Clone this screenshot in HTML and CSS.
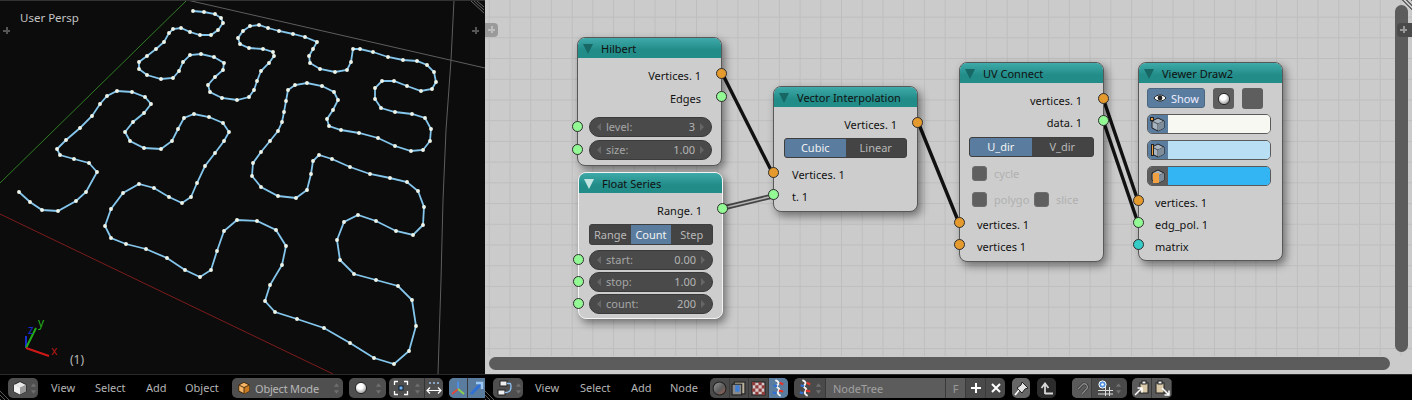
FILE: index.html
```html
<!DOCTYPE html>
<html lang="en">
<head>
<meta charset="utf-8">
<title>Node editor</title>
<link rel="stylesheet" href="styles.css">
</head>
<body>
<svg class="defs" width="0" height="0" aria-hidden="true">
  <defs>
    <symbol id="cube" viewBox="0 0 16 16">
      <path d="M8 1.500 14 4.500V11.500L8 14.500 2 11.500V4.500Z" fill="#e8e8e8" stroke="#222" stroke-width="1"/>
      <path d="M2 4.500 8 7.500 14 4.500V11.500L8 14.500Z" fill="#9a9a9a"/>
      <path d="M8 7.500V14.500L2 11.500V4.500Z" fill="#f2f2f2"/>
    </symbol>
    <symbol id="ocube" viewBox="0 0 16 16">
      <path d="M8 1.500 14 4.500V11.500L8 14.500 2 11.500V4.500Z" fill="#f4b566" stroke="#3a2408"/>
      <path d="M8 7.500V14.500L14 11.500V4.500Z" fill="#c77a22"/>
      <path d="M2 4.500 8 7.500 14 4.500" fill="none" stroke="#3a2408"/>
      <path d="M8 7.500V14.500" stroke="#3a2408"/>
    </symbol>
    <radialGradient id="ballg" cx=".42" cy=".35" r=".7">
      <stop offset=".35" stop-color="#fff"/><stop offset="1" stop-color="#8a8a8a"/>
    </radialGradient>
    <linearGradient id="matg" x1="0" y1="0" x2="1" y2="1">
      <stop offset="0" stop-color="#9a9a9a"/><stop offset=".55" stop-color="#5c5c5c"/><stop offset="1" stop-color="#a5604e"/>
    </linearGradient>
    <symbol id="ball" viewBox="0 0 16 16">
      <circle cx="8" cy="8" r="6.400" fill="url(#ballg)" stroke="#1c1c1c"/>
    </symbol>
    <symbol id="dna" viewBox="0 0 16 20">
      <path d="M5 1C14 5 3 7 8 10 13 12 3 15 11 19" fill="none" stroke="#f2f2f2" stroke-width="2.200"/>
      <path d="M10 4 14 6M9 13 14 14" stroke="#e3342b" stroke-width="2.600"/>
      <path d="M3 7 7 8M2 15 6 16" stroke="#2f6fd6" stroke-width="2.600"/>
    </symbol>
    <symbol id="spin" viewBox="0 0 8 14">
      <path d="M4 1 7 5H1ZM4 13 1 9H7Z" fill="#6f6f6f"/>
    </symbol>
    <symbol id="vcube" viewBox="0 0 16 16">
      <path d="M8 2 14 5V12L8 15 2 12V5Z" fill="#a8b4c0" stroke="#1d1d1d"/>
      <path d="M2 5 8 8 14 5M8 8V15" fill="none" stroke="#1d1d1d" stroke-width=".7"/>
      <path d="M8 8V15L14 12V5Z" fill="#7f8c99"/>
    </symbol>
  </defs>
</svg>

<main class="areas">
  <section class="view3d">
    <svg class="curve" width="485" height="374" viewBox="0 0 485 374" aria-hidden="true">
      <defs>
        <marker id="vert" markerUnits="userSpaceOnUse" markerWidth="5" markerHeight="5" refX="2.500" refY="2.500">
          <circle class="vert" cx="2.500" cy="2.500" r="1.950"/>
        </marker>
      </defs>
      <g class="axis-lines">
        <line class="l-green" x1="0" y1="183" x2="187" y2="0"/>
        <line class="l-grey" x1="187" y1="0" x2="485" y2="68"/>
        <line class="l-red" x1="0" y1="214" x2="333" y2="374"/>
        <polyline class="l-grey" points="454,0 451,60 446,130 443,200 441,280 438,374"/>
        <line class="l-widget" x1="471" y1="1" x2="484" y2="13"/>
        <line class="l-widget" x1="474" y1="1" x2="484" y2="10"/>
        <line class="l-widget" x1="477" y1="1" x2="484" y2="7"/>
      </g>
      <polyline class="spline" points="19,192 30,202 42,210 58,211 76,201 86,192 97,172 89,163 74,159 60,155 57,149 66,140 80,128 92,116 100,104 107,96 117,91 132,92 145,97 151,104 144,113 133,122 125,132 130,141 144,148 161,149 172,141 178,129 184,118 194,114 209,117 223,123 229,132 224,141 215,153 205,166 197,183 191,197 182,203 169,197 154,188 139,184 123,193 111,209 105,226 111,238 126,244 146,249 167,258 185,270 200,277 211,270 217,251 224,231 237,220 257,221 276,230 286,246 282,265 270,285 265,301 275,312 297,319 324,328 350,343 374,358 394,364 409,351 416,326 412,300 398,286 376,280 354,274 340,260 337,240 344,222 358,215 376,221 396,231 413,235 423,225 424,207 418,191 407,182 390,178 370,174 350,167 332,159 319,155 313,161 311,174 307,190 296,198 278,196 261,187 252,176 253,163 261,152 270,141 278,131 282,122 284,112 286,101 288,90 295,85 307,83 322,86 334,92 338,100 333,110 327,119 329,126 341,130 359,133 378,138 395,146 411,151 423,150 430,141 431,129 425,118 412,114 395,112 381,108 375,99 375,88 382,81 394,81 407,86 421,91 432,89 436,82 434,72 427,65 417,61 403,60 388,57 373,52 360,49 353,49 351,62 347,70 335,72 320,69 310,63 309,56 313,49 317,42 305,37 293,34 279,31 268,28 259,25 250,26 243,31 238,38 240,44 249,48 263,49 273,52 274,56 269,63 261,71 257,81 254,90 249,97 237,100 222,98 210,92 208,85 215,77 223,70 224,63 214,57 201,54 190,55 183,62 179,71 173,78 161,79 147,75 139,69 139,62 147,56 156,49 164,42 169,33 173,29 181,28 190,32 200,35 211,35 218,30 223,23 221,18 215,14 204,12 193,11"/>
      <g class="gizmo">
        <line class="g-z" x1="26" y1="348" x2="26" y2="336"/>
        <line class="g-y" x1="26" y1="348" x2="36" y2="328"/>
        <line class="g-x" x1="26" y1="348" x2="49" y2="356"/>
      </g>
    </svg>
    <span class="view-name">User Persp</span>
    <i class="plus plus-l"></i>
    <i class="plus plus-r"></i>
    <span class="glabel gl-z">z</span>
    <span class="glabel gl-y">y</span>
    <span class="glabel gl-x">x</span>
    <span class="frame-no">(1)</span>
  </section>

  <section class="nodeview">
    <svg class="wires" width="927" height="374" viewBox="485 0 927 374" aria-hidden="true">
      <line class="wire" x1="722" y1="73" x2="773" y2="174"/>
      <line class="wire" x1="918" y1="122" x2="959" y2="223"/>
      <line class="wire" x1="1103" y1="98" x2="1138" y2="201"/>
      <line class="wire" x1="1103" y1="120" x2="1138" y2="223"/>
      <line class="wire-sel-o" x1="723" y1="208" x2="773" y2="196"/>
      <line class="wire-sel-i" x1="723" y1="208" x2="773" y2="196"/>
    </svg>

    <article class="node n-hilbert">
      <header class="node-head"><i class="tri"></i>Hilbert</header>
      <div class="nrow out h23 t4"><span>Vertices. 1</span><b class="sock orange"></b></div>
      <div class="nrow out h23"><span>Edges</span><b class="sock green"></b></div>
      <div class="nrow inp h22 t8"><b class="sock green"></b><div class="num"><span>level:</span><span>3</span></div></div>
      <div class="nrow inp h23"><b class="sock green"></b><div class="num"><span>size:</span><span>1.00</span></div></div>
    </article>

    <article class="node n-vector">
      <header class="node-head"><i class="tri"></i>Vector Interpolation</header>
      <div class="nrow out h23 t4"><span>Vertices. 1</span><b class="sock orange"></b></div>
      <div class="seg"><span class="on">Cubic</span><span>Linear</span></div>
      <div class="nrow plain h22 t4"><b class="sock orange"></b><span>Vertices. 1</span></div>
      <div class="nrow plain h22"><b class="sock green"></b><span>t. 1</span></div>
    </article>

    <article class="node n-float selected">
      <header class="node-head"><i class="tri white"></i>Float Series</header>
      <div class="nrow out h23 t4"><span>Range. 1</span><b class="sock green"></b></div>
      <div class="seg seg3"><span>Range</span><span class="on">Count</span><span>Step</span></div>
      <div class="nrow inp h22 t4"><b class="sock green"></b><div class="num"><span>start:</span><span>0.00</span></div></div>
      <div class="nrow inp h22"><b class="sock green"></b><div class="num"><span>stop:</span><span>1.00</span></div></div>
      <div class="nrow inp h22"><b class="sock green"></b><div class="num"><span>count:</span><span>200</span></div></div>
    </article>

    <article class="node n-uv">
      <header class="node-head"><i class="tri"></i>UV Connect</header>
      <div class="nrow out h23 t4"><span>vertices. 1</span><b class="sock orange"></b></div>
      <div class="nrow out h22"><span>data. 1</span><b class="sock green"></b></div>
      <div class="seg seg-uv"><span class="on">U_dir</span><span>V_dir</span></div>
      <div class="checks t3"><i class="chk"></i><span>cycle</span></div>
      <div class="checks"><i class="chk"></i><span class="w-poly">polygo</span><i class="chk"></i><span>slice</span></div>
      <div class="nrow plain h22"><b class="sock orange"></b><span>vertices. 1</span></div>
      <div class="nrow plain h22"><b class="sock orange"></b><span>vertices 1</span></div>
    </article>

    <article class="node n-viewer">
      <header class="node-head"><i class="tri"></i>Viewer Draw2</header>
      <div class="show-row">
        <span class="show"><svg width="14" height="10" viewBox="0 0 14 10" aria-hidden="true"><path d="M1 5C4 1 10 1 13 5 10 9 4 9 1 5Z" fill="#fff" stroke="#222"/><circle cx="7" cy="5" r="2.400" fill="#222"/></svg>Show</span>
        <span class="tog"><svg width="14" height="14" aria-hidden="true"><use href="#ball"/></svg></span>
        <span class="tog"></span>
      </div>
      <div class="swatch"><span class="sw-ico on"><svg width="16" height="16" aria-hidden="true"><use href="#vcube"/></svg><i class="dot"></i></span><span class="sw-col c1"></span></div>
      <div class="swatch"><span class="sw-ico on"><svg width="16" height="16" aria-hidden="true"><use href="#vcube"/></svg><i class="bar"></i></span><span class="sw-col c2"></span></div>
      <div class="swatch sw-last"><span class="sw-ico"><svg width="16" height="16" aria-hidden="true"><use href="#vcube"/></svg><i class="face"></i></span><span class="sw-col c3"></span></div>
      <div class="nrow plain h22 t4"><b class="sock orange"></b><span>vertices. 1</span></div>
      <div class="nrow plain h22"><b class="sock green"></b><span>edg_pol. 1</span></div>
      <div class="nrow plain h22"><b class="sock cyan"></b><span>matrix</span></div>
    </article>

    <span class="tab tab-l"><i class="plus plus-t"></i></span>
    <i class="strip"></i>
    <i class="sb-h"></i>
    <i class="sb-v"></i>
    <span class="tab tab-r"><i class="plus plus-u"></i></span>
    <i class="corner"></i>
  </section>
</main>

<footer class="headers">
  <nav class="hdr hdr-l">
    <span class="w w-type"><svg width="16" height="16" aria-hidden="true"><use href="#cube"/></svg><svg width="7" height="13" aria-hidden="true"><use href="#spin"/></svg></span>
    <span class="menu m1">View</span><span class="menu m2">Select</span><span class="menu m3">Add</span><span class="menu m4">Object</span>
    <span class="w w-mode"><svg width="14" height="14" aria-hidden="true"><use href="#ocube"/></svg><span class="grow">Object Mode</span><svg width="7" height="13" aria-hidden="true"><use href="#spin"/></svg></span>
    <span class="w w-shade"><svg width="14" height="14" aria-hidden="true"><use href="#ball"/></svg><svg width="7" height="13" aria-hidden="true"><use href="#spin"/></svg></span>
    <span class="w w-pivot">
      <svg width="16" height="16" viewBox="0 0 16 16" aria-hidden="true"><path d="M1.500 5V1.500H5M11 1.500H14.500V5M14.500 11V14.500H11M5 14.500H1.500V11" fill="none" stroke="#fff" stroke-width="1.300"/><rect x="6" y="6" width="4" height="4" fill="#6fb1ee" stroke="#123"/></svg>
      <svg class="sp-p" width="7" height="13" aria-hidden="true"><use href="#spin"/></svg>
      <span class="sep"></span>
      <svg width="16" height="16" viewBox="0 0 16 16" aria-hidden="true"><path d="M3 3h2M7 3h2M11 3h2" stroke="#9cc4ea" stroke-width="1.600"/><path d="M1 10.500H15M4 7.500 1 10.500 4 13.500M12 7.500 15 10.500 12 13.500" fill="none" stroke="#fff" stroke-width="1.200"/></svg>
    </span>
    <span class="w w-manip">
      <span class="cell on"><svg width="16" height="16" viewBox="0 0 16 16" aria-hidden="true"><path d="M8 9V1.500" stroke="#4f8fe8" stroke-width="1.800"/><path d="M8 9 2 14" stroke="#e2483a" stroke-width="1.800"/><path d="M8 9 14 14" stroke="#8ad14c" stroke-width="1.800"/></svg></span>
      <span class="cell on"><svg width="16" height="16" viewBox="0 0 16 16" aria-hidden="true"><path d="M2 14 12 4" stroke="#2f6fd6" stroke-width="3"/><path d="M7 3H13V9" fill="none" stroke="#9cc8f5" stroke-width="2.400"/></svg></span>
    </span>
  </nav>
  <nav class="hdr hdr-r">
    <span class="w w-type"><svg width="16" height="16" viewBox="0 0 16 16" aria-hidden="true"><rect x="3" y="1" width="7" height="5" fill="#eee" stroke="#222"/><rect x="1" y="10" width="7" height="5" fill="#eee" stroke="#222"/><path d="M10 3.500H13Q14 3.500 14 7 14 12.500 8 12.500" fill="none" stroke="#8cc0f0" stroke-width="1.300"/></svg><svg width="7" height="13" aria-hidden="true"><use href="#spin"/></svg></span>
    <span class="menu m1">View</span><span class="menu m2">Select</span><span class="menu m3">Add</span><span class="menu m5">Node</span>
    <span class="w w-tree">
      <span class="cell"><svg width="15" height="15" viewBox="0 0 14 14" aria-hidden="true"><circle cx="7" cy="7" r="6" fill="url(#matg)" stroke="#222"/></svg></span>
      <span class="cell"><svg width="15" height="15" viewBox="0 0 14 14" aria-hidden="true"><rect x="3" y="1" width="10" height="11" fill="#b8b09a" stroke="#222"/><rect x="1" y="3" width="9" height="10" fill="#8a8a8a" stroke="#222"/><rect x="4" y="4" width="4" height="6" fill="#3f7fd6"/></svg></span>
      <span class="cell"><svg width="15" height="15" viewBox="0 0 14 14" aria-hidden="true"><rect x="1" y="1" width="12" height="12" fill="#d8c8c8" stroke="#222"/><path d="M1 1h3v3H1zM7 1h3v3H7zM4 4h3v3H4zM10 4h3v3h-3zM1 7h3v3H1zM7 7h3v3H7zM4 10h3v3H4zM10 10h3v3h-3z" fill="#8f3b3b"/></svg></span>
      <span class="cell on"><svg width="14" height="18" aria-hidden="true"><use href="#dna"/></svg></span>
    </span>
    <span class="w w-ntree">
      <span class="cell c-dna"><svg width="14" height="18" aria-hidden="true"><use href="#dna"/></svg><svg width="7" height="13" aria-hidden="true"><use href="#spin"/></svg></span>
      <span class="cell c-name">NodeTree</span>
      <span class="cell c-f">F</span>
      <span class="cell c-sq"><svg width="12" height="12" viewBox="0 0 12 12" aria-hidden="true"><path d="M6 1V11M1 6H11" stroke="#fff" stroke-width="2"/></svg></span>
      <span class="cell c-sq"><svg width="12" height="12" viewBox="0 0 12 12" aria-hidden="true"><path d="M2 2 10 10M10 2 2 10" stroke="#fff" stroke-width="2"/></svg></span>
    </span>
    <span class="w w-pin"><svg width="15" height="15" viewBox="0 0 15 15" aria-hidden="true"><path d="M1 14 6 8" stroke="#fff" stroke-width="1.600"/><path d="M8 1 14 7 11 8 8 12 3 7 7 4Z" fill="#e4e4e4" stroke="#222"/></svg></span>
    <span class="w w-up"><svg width="14" height="14" viewBox="0 0 14 14" aria-hidden="true"><path d="M5 13V3M1.500 7 5 2.500 8.500 7M5 12.500H13" fill="none" stroke="#d8d8d8" stroke-width="1.800"/></svg></span>
    <span class="w w-snap">
      <span class="cell c-mag"><svg width="14" height="14" viewBox="0 0 14 14" aria-hidden="true"><path d="M3 8 8 3A3.200 3.200 0 0 1 12 7.500L7 13" fill="none" stroke="#2e2e2e" stroke-width="2.600"/><path d="M3 8 8 3A3.200 3.200 0 0 1 12 7.500L7 13" fill="none" stroke="#8d8d8d" stroke-width="1.400"/></svg></span>
      <span class="cell c-tgt"><svg width="16" height="16" viewBox="0 0 16 16" aria-hidden="true"><path d="M1 10.500H16M1 14H16M8.500 7V16M12.500 7V16" stroke="#dcdcdc"/><circle cx="5.500" cy="4.500" r="3.600" fill="#4f8fe0" stroke="#fff"/><circle cx="5.500" cy="4.500" r="1.300" fill="#fff"/></svg><svg width="7" height="13" aria-hidden="true"><use href="#spin"/></svg></span>
    </span>
    <span class="w w-clip">
      <span class="cell"><svg width="16" height="16" viewBox="0 0 16 16" aria-hidden="true"><rect x="6" y="3" width="8" height="10" fill="#d9c9a8" stroke="#222"/><rect x="8" y="1" width="4" height="3" fill="#eee" stroke="#222"/><path d="M1 15 8 8M3.500 8H8V12.500" fill="none" stroke="#fff" stroke-width="1.500"/></svg></span>
      <span class="cell"><svg width="16" height="16" viewBox="0 0 16 16" aria-hidden="true"><rect x="2" y="3" width="8" height="10" fill="#d9c9a8" stroke="#222"/><rect x="4" y="1" width="4" height="3" fill="#eee" stroke="#222"/><path d="M8 8 15 15M15 10.500V15H10.500" fill="none" stroke="#fff" stroke-width="1.500"/></svg></span>
    </span>
  </nav>
</footer>
</body>
</html>
```

FILE: styles.css
```css
* { box-sizing: border-box; }
html, body { margin: 0; padding: 0; }
body {
  width: 1412px; height: 400px; overflow: hidden; background: #000;
  font-family: "Noto Sans", "Open Sans", sans-serif; font-size: 11px;
  display: flex; flex-direction: column;
}
.defs { position: absolute; }
.areas { display: flex; height: 374px; flex: none; }

/* 3D view */
.view3d { position: relative; width: 485px; flex: none; background: #0c0c0c; overflow: hidden; border-top: 1px solid #333; }
.curve { display: block; margin-top: -1px; }
.axis-lines line, .axis-lines polyline { fill: none; stroke-width: 1; }
.l-green { stroke: #2f7d24; }
.l-grey { stroke: #5e5e5e; fill: none; }
.l-red { stroke: #7d1c1c; }
.l-widget { stroke: #666; }
.spline {
  fill: none; stroke: #84c6ec; stroke-width: 1.800;
  marker-start: url(#vert); marker-mid: url(#vert); marker-end: url(#vert);
}
.vert { fill: #eef4e8; }
.g-z { stroke: #1a2fd0; stroke-width: 2; }
.g-y { stroke: #22b01a; stroke-width: 2; }
.g-x { stroke: #d01818; stroke-width: 2; }
.view-name { position: absolute; left: 20px; top: 10px; color: #c4c4c4; font-size: 11.500px; line-height: 14px; }
.frame-no { position: absolute; left: 70px; top: 352px; color: #bbb; font-size: 12px; line-height: 14px; }
.glabel { position: absolute; font-size: 12px; line-height: 12px; }
.gl-z { left: 28px; top: 323px; color: #1a2fd0; }
.gl-y { left: 38px; top: 316px; color: #22b01a; }
.gl-x { left: 51px; top: 344px; color: #b01818; }
.plus {
  position: absolute; width: 7px; height: 7px;
  background:
    linear-gradient(var(--pc), var(--pc)) center / 7px 2px no-repeat,
    linear-gradient(var(--pc), var(--pc)) center / 2px 7px no-repeat;
}
.plus-l { --pc: #555; left: 3px; top: 26px; }
.plus-r { --pc: #555; left: 472px; top: 26px; }

/* Node editor */
.nodeview {
  position: relative; flex: 1; overflow: hidden;
  background-color: #cbcbcb;
  background-image:
    linear-gradient(#bebebe 0 1px, transparent 1px),
    linear-gradient(90deg, #bebebe 0 1px, transparent 1px);
  background-size: 20.720px 20.720px;
  background-position: 3.800px 16.600px;
}
.wires { position: absolute; left: 0; top: 0; z-index: 1; pointer-events: none; }
.wire { stroke: #111; stroke-width: 3.400; }
.wire-sel-o { stroke: #444; stroke-width: 5; }
.wire-sel-i { stroke: #b5b5b5; stroke-width: 1.500; }

.node {
  position: absolute; width: 145px; background: #cdcdcd; border-radius: 8px;
  border: 1px solid #585858; color: #111; font-size: 11px;
  box-shadow: 3px 4px 9px rgba(0,0,0,.45); z-index: 2;
}
.node.selected { border-color: #f4f4f4; }
.n-hilbert { left: 92px; top: 37px; height: 129px; }
.n-vector { left: 288px; top: 86px; height: 126px; }
.n-float { left: 93px; top: 172px; height: 147px; }
.n-uv { left: 474px; top: 62px; height: 200px; }
.n-viewer { left: 653px; top: 62px; height: 199px; }
.node-head {
  height: 20px; border-radius: 7px 7px 0 0; padding-left: 23px;
  background: linear-gradient(#3eaaa9, #228c89 60%);
  color: #111; line-height: 21px; display: block; position: relative;
}
.tri {
  position: absolute; left: 5px; top: 6px; width: 0; height: 0;
  border-left: 5px solid transparent; border-right: 5px solid transparent;
  border-top: 10px solid #176765;
}
.tri.white { border-top-color: #c4e4e2; }

.nrow { position: relative; display: flex; align-items: center; line-height: 14px; white-space: nowrap; }
.out { justify-content: flex-end; padding-right: 20px; padding-top: 4px; }
.plain { padding-top: 3px; }
.n-vector .plain { padding-left: 18px; }
.n-uv .plain { padding-left: 17px; }
.n-uv .out { padding-right: 21px; }
.n-viewer .plain { padding-left: 16px; }
.h22 { height: 22px; } .h23 { height: 23px; }
.t3 { margin-top: 3px; } .t4 { margin-top: 4px; } .t8 { margin-top: 8px; }
.sock {
  position: absolute; width: 11px; height: 11px; border-radius: 50%;
  border: 1px solid #2d2d2d; top: 50%; margin-top: -6px;
}
.out .sock { right: -6px; }
.inp .sock, .plain .sock { left: -6px; }
.orange { background: #e59a2e; }
.green { background: #93f995; }
.cyan { background: #35cbc6; }
.inp { padding: 0 9px 0 11px; }
.n-float .inp { padding-left: 10px; }
.num {
  flex: 1; height: 20px; border-radius: 10px; background: #4a4a4a; border: 1px solid #3a3a3a;
  color: #a6a6a6; padding: 0 16px; display: flex; justify-content: space-between; align-items: center;
  position: relative; font-size: 11px;
}
.num::before, .num::after {
  content: ""; position: absolute; top: 5px; width: 0; height: 0;
  border-top: 4px solid transparent; border-bottom: 4px solid transparent;
}
.num::before { left: 7px; border-right: 4px solid #666; }
.num::after { right: 7px; border-left: 4px solid #666; }
.num span:last-child { color: #b4b4b4; }
.seg {
  display: flex; height: 20px; margin: 4px 10px 0; border: 1px solid #3e3e3e; border-radius: 3px;
  overflow: hidden; background: #444; color: #b8b8b8; font-size: 11px; line-height: 18px;
}
.seg span { flex: 1; text-align: center; }
.seg .on { background: #5a7d9f; color: #f2f2f2; }
.seg3 { height: 21px; margin: 4px 9px 0 10px; line-height: 19px; }
.seg-uv { margin: 5px 9px 0; }
.checks { display: flex; align-items: center; height: 26px; padding-left: 12px; color: #b0b0b0; font-size: 11px; }
.chk { width: 15px; height: 15px; border-radius: 3px; background: #5f5f5f; border: 1px solid #6c6c6c; margin-right: 7px; flex: none; }
.w-poly { width: 33px; margin-right: 7px; }

.show-row { display: flex; gap: 8px; padding: 5px 0 0 8px; height: 25px; }
.show {
  width: 58px; height: 20px; background: #5a7d9f; border: 1px solid #4c6680; border-radius: 3px;
  color: #eef; display: flex; align-items: center; justify-content: center; gap: 4px; font-size: 11px;
}
.tog { width: 21px; height: 21px; background: #5e5e5e; border-radius: 3px; display: flex; align-items: center; justify-content: center; }
.swatch { display: flex; height: 20px; margin: 6px 11px 0 8px; border: 1px solid #5a5a5a; border-radius: 5px; overflow: hidden; }
.sw-last { margin-top: 6px; }
.sw-ico { width: 20px; position: relative; background: #5c5c5c; display: flex; align-items: center; justify-content: center; flex: none; }
.sw-ico.on { background: #5a7d9f; }
.sw-col { flex: 1; }
.c1 { background: #f7f8f2; }
.c2 { background: #b8dff3; }
.c3 { background: #32b5f2; }
.dot { position: absolute; left: 2px; top: 2px; width: 4px; height: 4px; background: #f0a040; border: 1px solid #222; }
.bar { position: absolute; left: 3px; top: 3px; width: 3px; height: 12px; background: #f0a040; border: 1px solid #222; }
.face { position: absolute; left: 5px; top: 6px; width: 6px; height: 10px; background: #f0a040; }

.strip { position: absolute; left: 0; right: 0; top: 356px; height: 18px; background: #cbcbcb; }
.sb-h { position: absolute; left: 4px; top: 357px; width: 901px; height: 13px; border-radius: 7px; background: #5c5c5c; z-index: 3; }
.sb-v { position: absolute; left: 910px; top: 5px; width: 13px; height: 347px; border-radius: 7px; background: #5c5c5c; z-index: 3; }
.tab { position: absolute; top: 23px; height: 14px; z-index: 4; }
.tab-l { left: 0; width: 13px; border-radius: 0 4px 4px 0; background: #9a9a9a; }
.tab-r { left: 912px; width: 15px; border-radius: 4px 0 0 4px; background: #4a4a4a; }
.plus-t { --pc: #bdbdbd; left: 3px; top: 3px; }
.plus-u { --pc: #989898; left: 3px; top: 3px; }
.corner {
  position: absolute; right: 0; top: 0; width: 12px; height: 11px; z-index: 4;
  background: repeating-linear-gradient(45deg, #666 0 1px, transparent 1px 3px);
  clip-path: polygon(0 0, 100% 0, 100% 100%);
}

/* Headers */
.headers { display: flex; height: 26px; flex: none; background: #000; border-top: 1px solid #2a2a2a; color: #b4b4b4; }
.hdr { position: relative; display: flex; align-items: center; height: 25px; padding: 3px 0 2px; overflow: hidden; flex: none; }
.hdr::before {
  content: ""; position: absolute; left: 0; bottom: 0; width: 11px; height: 11px;
  background: repeating-linear-gradient(45deg, #5a5a5a 0 1px, transparent 1px 3px);
  clip-path: polygon(0 0, 100% 100%, 0 100%);
}
.hdr-l { width: 485px; }
.hdr-r { flex: 1; }
.w {
  display: flex; align-items: center; height: 20px; background: #4f4f4f; border-radius: 5px; flex: none;
  color: #b8b8b8; overflow: hidden;
}
.w-type { width: 30px; margin-left: 8px; padding-left: 4px; gap: 2px; }
.menu { flex: none; font-size: 11px; line-height: 20px; }
.m1 { margin-left: 13px; width: 44px; }
.m2 { width: 51px; }
.m3 { width: 39px; }
.m4 { width: 47px; }
.m5 { width: 40px; }
.hdr-r .m1 { margin-left: 12px; width: 45px; }
.w-mode { width: 111px; padding: 0 3px 0 5px; gap: 4px; letter-spacing: -.2px; }
.grow { flex: 1; font-size: 11px; }
.w-shade { margin-left: 6px; width: 37px; padding: 0 4px 0 5px; justify-content: space-between; }
.w-pivot { margin-left: 3px; width: 54px; padding: 0 0 0 4px; }
.sp-p { margin-left: 5px; }
.sep { width: 1px; height: 20px; background: #333; margin: 0 1px 0 3px; }
.w-manip { margin-left: 6px; width: 40px; }
.cell { display: flex; align-items: center; justify-content: center; height: 20px; flex: none; border-right: 1px solid #3a3a3a; }
.w-manip .cell { width: 19px; background: #5a7d9f; }
.w-tree { width: 78px; background: #4a4a4a; }
.w-tree .cell { width: 19.500px; }
.w-tree .on { background: #5a7d9f; border-right: 0; }
.w-ntree { margin-left: 6px; width: 211px; background: #4a4a4a; }
.c-dna { width: 32px; gap: 3px; }
.c-name { width: 120px; justify-content: flex-start; padding-left: 7px; background: #5c5c5c; color: #a0a0a0; font-size: 11px; }
.c-f { width: 20px; color: #999; background: #5c5c5c; }
.c-sq { width: 20px; }
.c-sq:last-child { width: 19px; border-right: 0; }
.w-pin { margin-left: 7px; width: 18px; justify-content: center; background: #666; }
.w-up { margin-left: 7px; width: 19px; justify-content: center; background: #2c2c2c; }
.w-snap { margin-left: 16px; width: 55px; background: #4a4a4a; }
.c-mag { width: 20px; background: #5a5a5a; }
.c-tgt { width: 35px; gap: 2px; border-right: 0; }
.w-clip { margin-left: 5px; width: 40px; background: #5a5a5a; }
.w-clip .cell { width: 20px; }
```
